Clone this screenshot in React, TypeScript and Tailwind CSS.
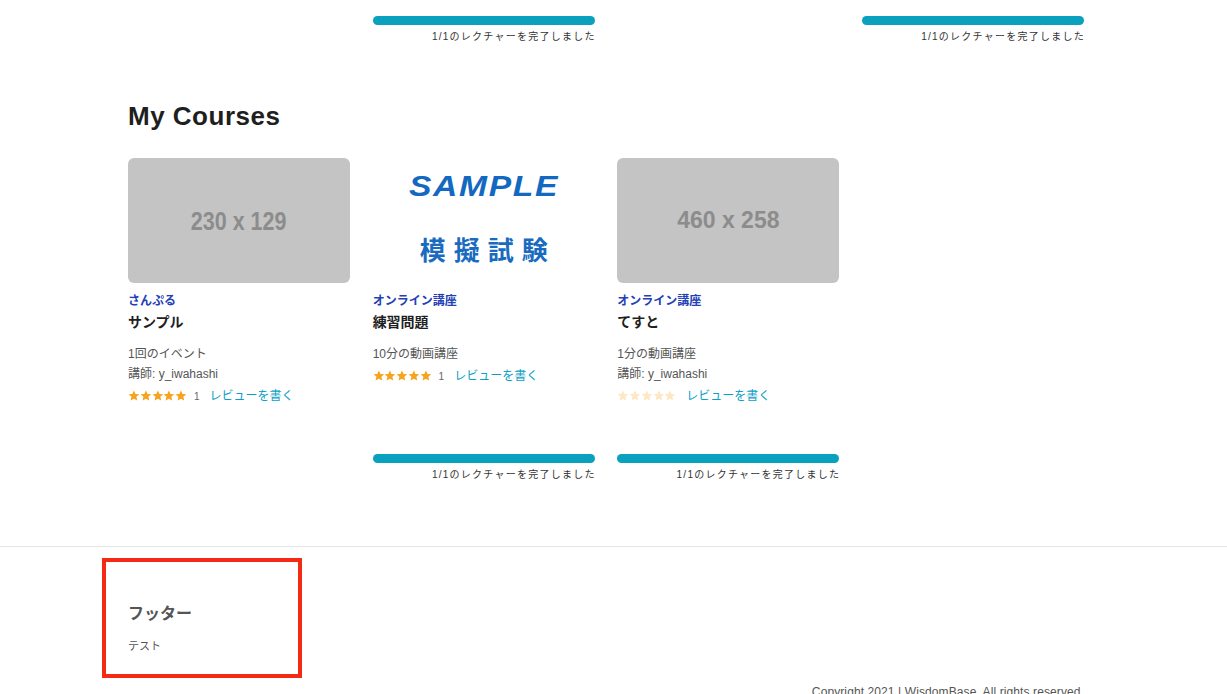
import React from "react";

const jp = { fontFamily: '"Liberation Sans", "Noto Sans CJK JP", sans-serif' };

function Stars({ faded }: { faded?: boolean }) {
  return (
    <div className="flex items-center">
      {[0, 1, 2, 3, 4].map((i) => (
        <svg key={i} viewBox="0 0 24 24" className="w-[11.8px] h-[11.8px]">
          <path
            d="M12 1.2l3.2 7.1 7.6.6-5.8 5 1.8 7.6L12 17.6l-6.8 3.9 1.8-7.6-5.8-5 7.6-.6z"
            fill={faded ? "#fde8c4" : "#f7a31c"}
          />
        </svg>
      ))}
    </div>
  );
}

function Progress() {
  return (
    <div className="flex flex-col">
      <div className="h-[9px] rounded-full bg-[#0aa1bf]" />
      <div className="text-right text-[10px] leading-[14px] mt-[5px] text-[#333] tracking-[1.25px] -mr-[1px]">
        1/1のレクチャーを完了しました
      </div>
    </div>
  );
}

type Course = {
  thumb: "gray1" | "sample" | "gray2";
  category: string;
  title: string;
  meta: string;
  teacher?: string;
  rating?: string;
  faded?: boolean;
  progress: boolean;
};

const courses: Course[] = [
  { thumb: "gray1", category: "さんぷる", title: "サンプル", meta: "1回のイベント", teacher: "y_iwahashi", rating: "1", progress: false },
  { thumb: "sample", category: "オンライン講座", title: "練習問題", meta: "10分の動画講座", rating: "1", progress: true },
  { thumb: "gray2", category: "オンライン講座", title: "てすと", meta: "1分の動画講座", teacher: "y_iwahashi", faded: true, progress: true },
];

function Thumb({ kind }: { kind: Course["thumb"] }) {
  if (kind === "sample") {
    return (
      <div className="h-[125px] bg-white flex flex-col items-center pt-[12px]">
        <div
          className="text-[30px] leading-[32px] font-bold italic text-[#1368c0] tracking-[1.5px] inline-block scale-x-[1.12]"
          style={{ fontFamily: '"Liberation Sans", sans-serif' }}
        >
          SAMPLE
        </div>
        <div
          className="mt-[32px] text-[26px] leading-[30px] font-bold text-[#1a6bbf] tracking-[8px] pl-[8px]"
          style={{ fontFamily: '"Noto Sans CJK JP", sans-serif' }}
        >
          模擬試験
        </div>
      </div>
    );
  }
  return (
    <div className="h-[125px] rounded-[6px] bg-[#c4c4c4] flex items-center justify-center">
      {kind === "gray1" ? (
        <span
          className="text-[25px] font-bold text-[#8c8c8c] inline-block scale-x-[0.86] mt-[2px]"
          style={{ fontFamily: '"Liberation Sans", sans-serif' }}
        >
          230 x 129
        </span>
      ) : (
        <span
          className="text-[23px] font-bold text-[#8c8c8c]"
          style={{ fontFamily: '"Liberation Sans", sans-serif' }}
        >
          460 x 258
        </span>
      )}
    </div>
  );
}

function CourseCard({ c }: { c: Course }) {
  return (
    <div className="flex flex-col">
      <Thumb kind={c.thumb} />
      <div className="mt-[10px] text-[12px] leading-[16px] font-bold text-[#2340b6]">{c.category}</div>
      <div className="mt-[3px] text-[14px] leading-[20px] font-bold text-[#1f1f1f]">{c.title}</div>
      <div className="mt-[12px] text-[12px] leading-[20px] text-[#555]">{c.meta}</div>
      {c.teacher && <div className="text-[12px] leading-[20px] text-[#555]">講師: {c.teacher}</div>}
      <div className="mt-[3px] flex items-center h-[18px] text-[12px]">
        <Stars faded={c.faded} />
        {c.rating && <span className="ml-[7px] text-[10px] text-[#666]">{c.rating}</span>}
        <span className="ml-[10px] text-[#0ba0c6]">レビューを書く</span>
      </div>
      {c.progress && (
        <div className="mt-auto pt-[49px]">
          <Progress />
        </div>
      )}
    </div>
  );
}

export default function App() {
  return (
    <div className="min-h-screen w-full bg-white text-[#333] overflow-hidden" style={jp}>
      <main className="w-[956px] ml-[128px]">
        <div className="grid grid-cols-4 gap-x-[22.5px] pt-[16px]">
          <div />
          <Progress />
          <div />
          <Progress />
        </div>

        <h2 className="mt-[56px] text-[26px] leading-[32px] font-bold text-[#1f1f1f] tracking-[0.5px]">My Courses</h2>

        <div className="mt-[26px] grid grid-cols-4 gap-x-[22.5px] pb-[64px]">
          {courses.map((c) => (
            <CourseCard key={c.title} c={c} />
          ))}
        </div>
      </main>

      <footer className="border-t border-[#e6e6e6]">
        <div className="w-[956px] ml-[128px] pt-[11px]">
          <div className="-ml-[26px] w-[200px] h-[120px] border-4 border-[#f52a14] pl-[22px] pt-[40px]">
            <div className="text-[16px] leading-[24px] font-bold text-[#555]">フッター</div>
            <div className="mt-[12px] text-[11px] leading-[16px] text-[#555]">テスト</div>
          </div>
          <div className="mt-[6px] text-right text-[12px] leading-[16px] text-[#555] tracking-[0.1px]">
            Copyright 2021 | WisdomBase. All rights reserved.
          </div>
        </div>
      </footer>
    </div>
  );
}
